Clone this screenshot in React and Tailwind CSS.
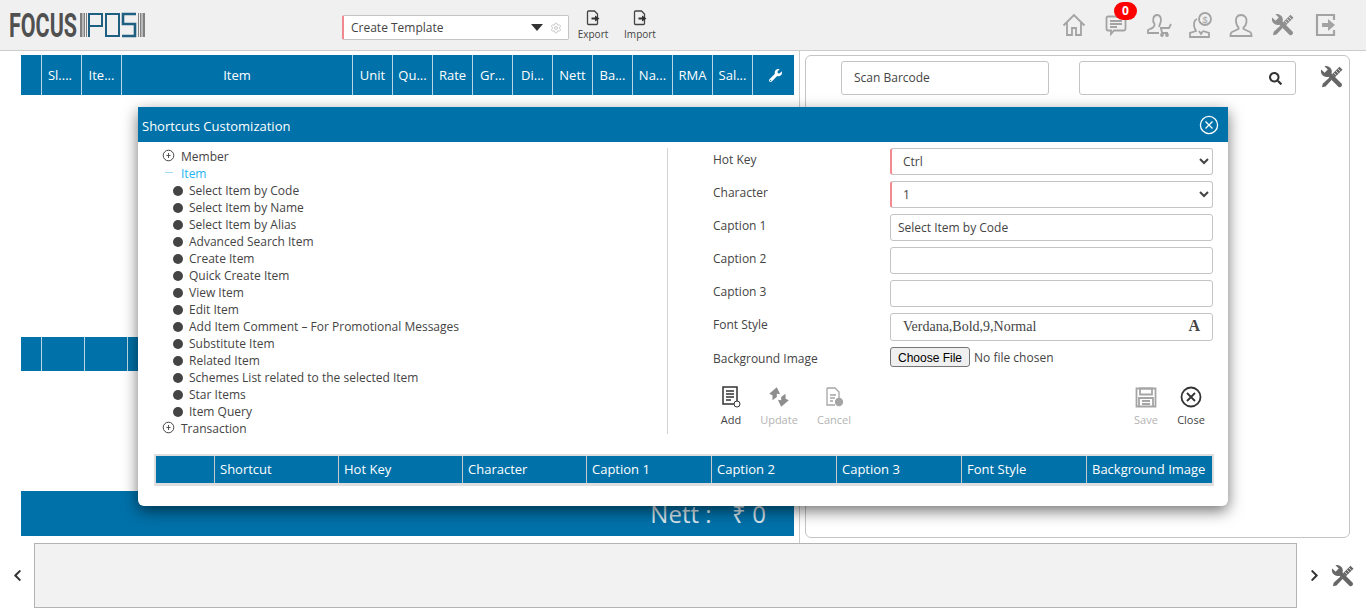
import { FaChevronLeft, FaChevronRight, FaSearch, FaWrench } from 'react-icons/fa';
import { Settings } from 'lucide-react';

const columns = [
  { label: '', w: 'w-[21px]' },
  { label: 'Sl....', w: 'w-[40px] pr-[3px]' },
  { label: 'Ite...', w: 'w-[40px]' },
  { label: 'Item', w: 'w-[231px]' },
  { label: 'Unit', w: 'w-[40px]' },
  { label: 'Qu...', w: 'w-[40px]' },
  { label: 'Rate', w: 'w-[40px]' },
  { label: 'Gr...', w: 'w-[40px]' },
  { label: 'Di...', w: 'w-[40px]' },
  { label: 'Nett', w: 'w-[40px]' },
  { label: 'Ba...', w: 'w-[40px]' },
  { label: 'Na...', w: 'w-[40px]' },
  { label: 'RMA', w: 'w-[40px]' },
  { label: 'Sal...', w: 'w-[40px]' },
];

const treeItems = [
  'Select Item by Code',
  'Select Item by Name',
  'Select Item by Alias',
  'Advanced Search Item',
  'Create Item',
  'Quick Create Item',
  'View Item',
  'Edit Item',
  'Add Item Comment – For Promotional Messages',
  'Substitute Item',
  'Related Item',
  'Schemes List related to the selected Item',
  'Star Items',
  'Item Query',
];

const gridColumns = [
  { label: '', w: 'w-[59px]' },
  { label: 'Shortcut', w: 'w-[124px]' },
  { label: 'Hot Key', w: 'w-[124px]' },
  { label: 'Character', w: 'w-[124px]' },
  { label: 'Caption 1', w: 'w-[125px]' },
  { label: 'Caption 2', w: 'w-[125px]' },
  { label: 'Caption 3', w: 'w-[125px]' },
  { label: 'Font Style', w: 'w-[125px]' },
  { label: 'Background Image', w: 'flex-1' },
];

function Logo() {
  return (
    <svg width="146" height="38" viewBox="0 -4 146 38" className="ml-[2px]">
      <text x="7" y="27" textLength="68" lengthAdjust="spacingAndGlyphs" fontFamily="Roboto" fontWeight="700" fontSize="33" fill="#505050">
        FOCUS
      </text>
      <g fill="#808080">
        <rect x="78" y="3" width="2.500" height="24" />
        <rect x="81.500" y="3" width="1.500" height="24" />
        <rect x="84" y="3" width="1" height="24" />
        <rect x="136" y="3" width="1" height="24" />
        <rect x="138" y="3" width="1.500" height="24" />
        <rect x="140.500" y="3" width="2.500" height="24" />
      </g>
      <g fill="none" stroke="#1f5f82">
        <path d="M87 27V4h13v12H88" strokeWidth="2" />
        <path d="M104 4h13v22h-13z" strokeWidth="2" />
        <path d="M134 4h-13v10h12v12h-13" strokeWidth="2.600" />
      </g>
    </svg>
  );
}

function FileActionIcon() {
  return (
    <svg width="16" height="16" viewBox="0 0 16 16" fill="none" stroke="#444" strokeWidth="1.300">
      <path d="M3.500 1h6l3 3v9.500a1 1 0 0 1-1 1h-8a1 1 0 0 1-1-1V2a1 1 0 0 1 1-1z" />
      <path d="M6.500 7.500H10V5.500l4.500 3-4.500 3v-2H6.500z" fill="#333" stroke="none" />
    </svg>
  );
}

function ToolsIcon({ size, color }) {
  return (
    <svg width={size} height={size} viewBox="0 0 24 24" className="shrink-0">
      <path
        d="M1.200 4.400 4.600 7.800 7.800 4.600 4.400 1.200A5.800 5.800 0 0 1 11.500 8.600L21.500 18.600A2.200 2.200 0 0 1 18.400 21.700L8.400 11.700A5.800 5.800 0 0 1 1.200 4.400Z"
        fill={color}
      />
      <path d="M19.500 1.800 22.500 4.800 15 12.300 12 9.300Z" fill={color} />
      <path d="M9.500 12.500 11.800 14.800 5.500 21.500 2 22.300 2.700 18.800Z" fill={color} />
      <path d="M17.800 3.800 20.500 6.500M15.800 5.800 18.500 8.500M13.800 7.800 16.500 10.500" stroke="#f0f0f0" strokeWidth="0.800" />
    </svg>
  );
}

function HeaderIcons() {
  const stroke = { fill: 'none', stroke: '#a3a3a3', strokeWidth: 1.800 };
  return (
    <div className="ml-auto flex items-center mr-[29px]">
      <svg width="24" height="24" viewBox="0 0 24 24" {...stroke}>
        <path d="M1.500 12.500 12 2l10.500 10.500M5 10v12h5v-7h4v7h5V10" />
      </svg>
      <div className="relative ml-[19px]">
        <svg width="22" height="22" viewBox="0 0 22 22" {...stroke}>
          <path d="M3 2.500h16a1.500 1.500 0 0 1 1.500 1.500v11a1.500 1.500 0 0 1-1.500 1.500H9l-3 3.500v-3.500H3A1.500 1.500 0 0 1 1.500 15V4A1.500 1.500 0 0 1 3 2.500z" />
          <path d="M5 7h12M5 10h12M5 13h7" />
        </svg>
        <span className="absolute -top-[12px] left-[9px] flex h-[18px] w-[23px] items-center justify-center rounded-full bg-[#fe0000] text-[12px] font-bold text-white">0</span>
      </div>
      <svg className="ml-[19px]" width="26" height="24" viewBox="0 0 26 24" {...stroke}>
        <path d="M5 16c3-2 4-3 3.500-5C6 8 7 2 11 2s5 5 3 9l-1 3M8 14l-6 3v3h11" />
        <path d="M14 15h9l2-4M15 15l1 5h6" />
        <circle cx="16" cy="22" r="1" />
        <circle cx="21" cy="22" r="1" />
      </svg>
      <svg className="ml-[16px]" width="26" height="26" viewBox="0 0 26 26" {...stroke}>
        <circle cx="17" cy="7" r="6" />
        <path d="M9 7c-3 1-4 6-2 10l1 2-6 2v4h19v-4l-6-2" />
        <path d="M11 19l2 3 2-3" />
        <text x="17" y="10.500" textAnchor="middle" fontSize="9" fontFamily="Liberation Sans" fill="#a3a3a3" stroke="none">$</text>
      </svg>
      <svg className="ml-[15px]" width="24" height="24" viewBox="0 0 24 24" {...stroke}>
        <path d="M12 2c-4 0-5.500 3-5 7 .3 2 1 4 2.500 5.500v1.500L3 19c-1.500.7-1.500 2-1.500 4h21c0-2 0-3.300-1.500-4l-6.500-3v-1.500C16.500 13 17.200 11 17.500 9c.5-4-1.500-7-5.500-7z" />
      </svg>
      <div className="ml-[18px]">
        <ToolsIcon size={24} color="#8e8e8e" />
      </div>
      <svg className="ml-[20px]" width="22" height="24" viewBox="0 0 22 24" fill="none" stroke="#a3a3a3" strokeWidth="2.200">
        <path d="M19 7V2H2v20h17v-5" />
        <path d="M7 10h6V6l7 6-7 6v-4H7z" fill="#a3a3a3" stroke="none" />
      </svg>
    </div>
  );
}

function FormRow({ label, children }) {
  return (
    <div className="flex h-[33px] items-start">
      <div className="w-[177px] pt-[2px] text-[12px] leading-[20px] text-[#444]">{label}</div>
      <div className="w-[323px]">{children}</div>
    </div>
  );
}

function TextField({ value }) {
  return (
    <div className="flex h-[27px] items-center rounded-[3px] border border-[#c4c4c4] bg-white px-[7px] text-[12px] text-[#444]">
      {value}
    </div>
  );
}

function Dropdown({ value }) {
  return (
    <select
      defaultValue={value}
      className="h-[27px] w-full rounded-[3px] border border-[#c4c4c4] border-l-2 border-l-[#f08a8f] bg-white pl-[7px] text-[12px] text-[#444]"
    >
      <option>{value}</option>
    </select>
  );
}

function ToolButton({ label, icon, muted, className }) {
  return (
    <div className={`flex w-[50px] shrink-0 flex-col items-center ${className || ''}`}>
      <div className="flex h-[24px] items-center justify-center">{icon}</div>
      <div className={`mt-[3px] text-[11px] leading-[16px] ${muted ? 'text-[#b3b3b3]' : 'text-[#444]'}`}>{label}</div>
    </div>
  );
}

function TreeToggle() {
  return (
    <svg width="13" height="13" viewBox="0 0 13 13" fill="none" stroke="#444" className="-mt-[2px]">
      <circle cx="6.500" cy="6.500" r="5.300" />
      <path d="M6.500 4v5M4.500 6.500h4" strokeWidth="0.900" />
    </svg>
  );
}

function ShortcutsDialog() {
  return (
    <div className="absolute left-[138px] top-[107px] h-[399px] w-[1090px] rounded-b-[6px] bg-white shadow-[0_5px_15px_rgba(0,0,0,0.55)]">
      <div className="flex h-[35px] items-center justify-between bg-[#0071a9] pl-[4px] pr-[9px] text-[13px] text-white">
        <span className="pt-[5px]">Shortcuts Customization</span>
        <svg width="20" height="20" viewBox="0 0 20 20" fill="none" stroke="white" strokeWidth="1.300">
          <circle cx="10" cy="10" r="8.600" />
          <path d="M6.500 6.500l7 7M13.500 6.500l-7 7" />
        </svg>
      </div>

      <div className="flex">
        {/* Tree */}
        <div className="mt-[6px] h-[286px] w-[530px] border-r border-[#d4d4d4] pl-[24px] text-[12px] leading-[17px] text-[#444]">
          <div className="flex h-[17px] items-center">
            <TreeToggle />
            <span className="ml-[6px]">Member</span>
          </div>
          <div className="flex h-[17px] items-center text-[#1fb5f4]">
            <span className="ml-[3px] -mt-[2px] h-[1px] w-[8px] bg-[#9fdcf7]" />
            <span className="ml-[8px]">Item</span>
          </div>
          {treeItems.map((item) => (
            <div key={item} className="flex h-[17px] items-center">
              <span className="ml-[11px] h-[10px] w-[10px] rounded-full bg-[#444]" />
              <span className="ml-[6px] whitespace-nowrap">{item}</span>
            </div>
          ))}
          <div className="flex h-[17px] items-center">
            <TreeToggle />
            <span className="ml-[6px]">Transaction</span>
          </div>
        </div>

        {/* Form */}
        <div className="mt-[6px] w-[500px] pl-[45px] box-content">
          <FormRow label="Hot Key"><Dropdown value="Ctrl" /></FormRow>
          <FormRow label="Character"><Dropdown value="1" /></FormRow>
          <FormRow label="Caption 1"><TextField value="Select Item by Code" /></FormRow>
          <FormRow label="Caption 2"><TextField value="" /></FormRow>
          <FormRow label="Caption 3"><TextField value="" /></FormRow>
          <FormRow label="Font Style">
            <div className="flex h-[28px] items-center justify-between rounded-[3px] border border-[#c4c4c4] pb-[2px] pl-[12px] pr-[12px] font-['Liberation_Serif',serif] text-[14px] text-[#444]">
              <span>Verdana,Bold,9,Normal</span>
              <span className="text-[16px] font-bold">A</span>
            </div>
          </FormRow>
          <div className="flex h-[33px] items-start">
            <div className="w-[177px] pt-[3px] text-[12px] leading-[20px] text-[#444]">Background Image</div>
            <input
              type="file"
              className="mt-[1px] w-[323px] text-[12px] leading-[20px] text-[#444] file:mr-[4px] file:h-[20px] file:rounded-[3px] file:border file:border-[#767676] file:bg-[#efefef] file:px-[7px] file:font-['Liberation_Sans',sans-serif] file:text-[12px] file:text-black"
            />
          </div>
          <div className="mt-[6px] flex items-start">
            <ToolButton
              label="Add"
              className="-ml-[7px]"
              icon={
                <svg width="20" height="22" viewBox="0 0 20 22" fill="none" stroke="#333" strokeWidth="1.500">
                  <path d="M2 1h14v17H2z" />
                  <path d="M5 5h8M5 8h8M5 11h8M5 14h5" />
                  <circle cx="16" cy="18" r="3" fill="white" strokeWidth="1" />
                </svg>
              }
            />
            <ToolButton
              label="Update"
              muted
              className="-ml-[2px]"
              icon={
                <svg width="24" height="22" viewBox="0 0 22 20" fill="#8d8d8d">
                  <path d="M9 1 2 7l3 1.500V13l4-3V7l3 .5z" />
                  <path d="M13 19l7-6-3-1.500V7l-4 3v3l-3-.5z" />
                </svg>
              }
            />
            <ToolButton
              label="Cancel"
              muted
              className="ml-[5px]"
              icon={
                <svg width="20" height="20" viewBox="0 0 20 20" fill="none" stroke="#a5a5a5" strokeWidth="1.300">
                  <path d="M3 1h8l4 4v6M3 1v17h8M6 8h6M6 11h5M6 14h3" />
                  <circle cx="15" cy="15" r="3.500" fill="#a5a5a5" />
                </svg>
              }
            />
            <ToolButton
              label="Save"
              muted
              className="ml-[262px]"
              icon={
                <svg width="22" height="21" viewBox="0 0 22 21" fill="none" stroke="#a5a5a5" strokeWidth="1.800">
                  <path d="M1.500 1.500h19v18h-19z" />
                  <path d="M5 1.500h12v6H5zM4 19.500V11h14v8.500M7 14h8M7 17h8" />
                </svg>
              }
            />
            <ToolButton
              label="Close"
              className="-ml-[5px]"
              icon={
                <svg width="22" height="22" viewBox="0 0 22 22" fill="none" stroke="#333" strokeWidth="1.800">
                  <circle cx="11" cy="11" r="9.500" />
                  <path d="M7 7l8 8M15 7l-8 8" />
                </svg>
              }
            />
          </div>
        </div>
      </div>

      {/* Grid */}
      <div className="ml-[16px] mt-[20px] flex h-[32px] w-[1060px] border-x-2 border-t-2 border-b-[3px] border-[#dedede] bg-[#0071a9] text-[13px] text-white">
        {gridColumns.map((col, index) => (
          <div key={index} className={`${col.w} flex items-center border-r border-[#c9c9c9] pl-[5px] last:border-r-0`}>
            {col.label}
          </div>
        ))}
      </div>
    </div>
  );
}

export default function App() {
  return (
    <div className="relative h-[613px] w-[1366px] overflow-hidden bg-white font-['Open_Sans',sans-serif]">
      {/* Top bar */}
      <div className="flex h-[51px] items-center border-b border-[#cccccc] bg-[#f0f0f0]">
        <Logo />
        <div className="ml-[194px] mt-[5px] flex h-[25px] w-[227px] items-center rounded-[2px] border border-[#c4c4c4] border-l-2 border-l-[#f08a8f] bg-white pl-[7px] pr-[6px] text-[12px] text-[#444]">
          <span>Create Template</span>
          <span className="ml-auto h-0 w-0 border-x-[6px] border-t-[7px] border-x-transparent border-t-[#333]" />
          <Settings className="ml-[7px] text-[#c9c9c9]" size={12} />
        </div>
        <div className="ml-[6px] flex w-[36px] flex-col items-center text-[10px] text-[#444]">
          <FileActionIcon />
          <span className="mt-[2px] leading-[12px]">Export</span>
        </div>
        <div className="ml-[11px] flex w-[36px] flex-col items-center text-[10px] text-[#444]">
          <FileActionIcon />
          <span className="mt-[2px] leading-[12px]">Import</span>
        </div>
        <HeaderIcons />
      </div>

      {/* Main area */}
      <div className="flex h-[492px]">
        <div className="ml-[21px] w-[773px] pt-[4px]">
          <div className="flex h-[40px] bg-[#0071a9] text-[13px] text-white">
            {columns.map((col, index) => (
              <div key={index} className={`${col.w} flex items-center justify-center border-r border-[#bcd6e4] pt-[2px] whitespace-nowrap`}>
                {col.label}
              </div>
            ))}
            <div className="flex flex-1 items-center justify-center pl-[4px]">
              <FaWrench size={13} />
            </div>
          </div>
          <div className="mt-[242px] flex h-[34px] bg-[#0071a9]">
            <div className="w-[21px] border-r border-[#bcd6e4]" />
            <div className="w-[43px] border-r border-[#bcd6e4]" />
            <div className="w-[43px] border-r border-[#bcd6e4]" />
          </div>
          <div className="mt-[120px] flex h-[45px] items-end justify-end bg-[#0071a9] pb-[4px] pr-[28px] text-[24px] leading-[36px] text-[#d8e6ee]">
            <span className="mr-[8px]">Nett :</span>&nbsp; ₹ 0
          </div>
        </div>

        <div className="ml-[5px] w-px bg-[#cccccc]" />

        <div className="ml-[5px] mt-[4px] flex h-[483px] w-[545px] items-start rounded-[6px] border border-[#c4c4c4] pt-[5px]">
          <div className="ml-[35px] flex h-[34px] w-[208px] items-center rounded-[3px] border border-[#c4c4c4] pl-[12px] text-[12px] text-[#444]">
            Scan Barcode
          </div>
          <div className="ml-[30px] flex h-[34px] w-[217px] items-center justify-end rounded-[3px] border border-[#c4c4c4] pr-[13px] text-[#333]">
            <FaSearch size={13} />
          </div>
          <div className="ml-[24px] mt-[4px]">
            <ToolsIcon size={24} color="#666" />
          </div>
        </div>
      </div>

      {/* Bottom strip */}
      <div className="flex h-[65px] items-center">
        <FaChevronLeft className="ml-[11px] text-[#333]" size={13} />
        <div className="ml-[10px] h-[65px] w-[1263px] border border-[#b3b3b3] bg-[#f2f2f2]" />
        <FaChevronRight className="ml-[11px] text-[#333]" size={13} />
        <div className="ml-[10px]">
          <ToolsIcon size={24} color="#666" />
        </div>
      </div>

      <ShortcutsDialog />
    </div>
  );
}
